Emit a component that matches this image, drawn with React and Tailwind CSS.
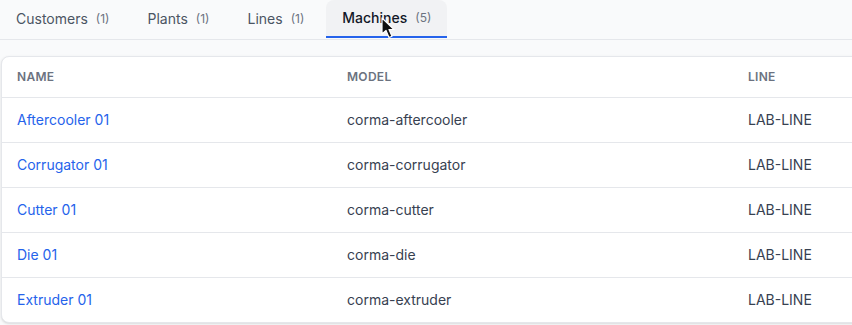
import React from "react";

const tabs = [
  { label: "Customers", count: 1 },
  { label: "Plants", count: 1 },
  { label: "Lines", count: 1 },
  { label: "Machines", count: 5, active: true },
];

const rows = [
  ["Aftercooler 01", "corma-aftercooler", "LAB-LINE"],
  ["Corrugator 01", "corma-corrugator", "LAB-LINE"],
  ["Cutter 01", "corma-cutter", "LAB-LINE"],
  ["Die 01", "corma-die", "LAB-LINE"],
  ["Extruder 01", "corma-extruder", "LAB-LINE"],
];

export default function App() {
  return (
    <div
      className="w-[852px] h-[325px] overflow-hidden bg-[#f9fafb]"
      style={{ fontFamily: "Inter, 'Noto Sans', sans-serif" }}
    >
      <div className="flex gap-1.5 border-b border-[#e5e7eb]">
        {tabs.map((t) => (
          <div
            key={t.label}
            className={
              t.active
                ? "relative flex items-center h-[38px] mb-px px-4 rounded-t-lg bg-[#f1f2f4] border-b-2 border-[#2563eb] text-[#111827]"
                : "flex items-center h-[38px] mb-px px-4 text-[#4b5563]"
            }
          >
            <span className={t.active ? "text-sm font-medium" : "text-sm"}>{t.label}</span>
            <span className="ml-2 text-xs text-[#6b7280]">({t.count})</span>
            {t.active && (
              <svg
                className="absolute left-[55px] top-[17px]"
                width="16"
                height="24"
                viewBox="0 0 16 24"
              >
                <path
                  d="M1 1 L1 17 L5 13.5 L8 20.5 L11 19.2 L8 12.5 L13 12.5 Z"
                  fill="#111"
                  stroke="#fff"
                  strokeWidth="1.2"
                  strokeLinejoin="round"
                />
              </svg>
            )}
          </div>
        ))}
      </div>

      <div className="mt-4 ml-px w-[910px] bg-white border border-[#e5e7eb] rounded-lg shadow-sm overflow-hidden">
        <table className="w-full table-fixed border-collapse text-left">
          <colgroup>
            <col className="w-[330px]" />
            <col className="w-[401px]" />
            <col />
          </colgroup>
          <thead>
            <tr className="h-10 border-b border-[#e5e7eb]">
              <th className="pl-[15px] pr-4 text-xs font-semibold tracking-wide text-[#6b7280]">NAME</th>
              <th className="pl-[15px] pr-4 text-xs font-semibold tracking-wide text-[#6b7280]">MODEL</th>
              <th className="pl-[15px] pr-4 text-xs font-semibold tracking-wide text-[#6b7280]">LINE</th>
            </tr>
          </thead>
          <tbody>
            {rows.map((r, i) => (
              <tr
                key={r[0]}
                className={i < rows.length - 1 ? "h-[45px] border-b border-[#e5e7eb]" : "h-[45px]"}
              >
                <td className="pl-[15px] pr-4 text-sm text-[#2563eb]">{r[0]}</td>
                <td className="pl-[15px] pr-4 text-sm text-[#374151]">{r[1]}</td>
                <td className="pl-[15px] pr-4 text-sm text-[#374151]">{r[2]}</td>
              </tr>
            ))}
          </tbody>
        </table>
      </div>
    </div>
  );
}
